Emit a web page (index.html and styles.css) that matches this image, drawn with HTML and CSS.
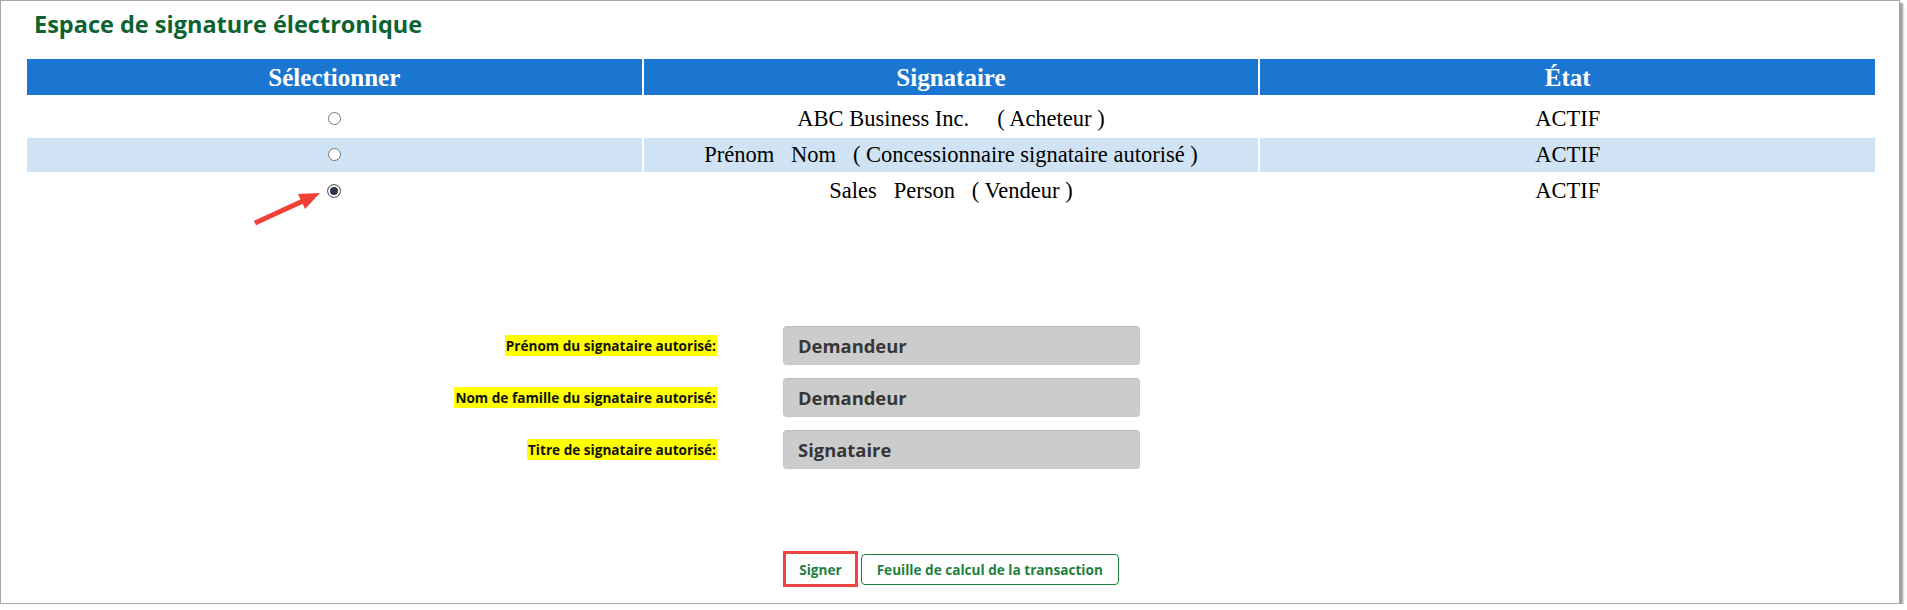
FILE: index.html
```html
<!DOCTYPE html>
<html lang="fr">
<head>
    <meta charset="UTF-8">
    <meta name="viewport" content="width=device-width, initial-scale=1.0">
    <title>Espace de signature électronique</title>
    <link rel="stylesheet" href="styles.css">
</head>
<body>
  <div class="frame">
    <h1 class="page-title">Espace de signature électronique</h1>

    <!-- Signataires -->
    <table class="signers">
      <thead>
        <tr>
          <th>Sélectionner</th>
          <th>Signataire</th>
          <th>État</th>
        </tr>
      </thead>
      <tbody>
        <tr>
          <td><input type="radio" name="signer" /></td>
          <td>ABC Business Inc.&nbsp;&nbsp;&nbsp;&nbsp; ( Acheteur )</td>
          <td>ACTIF</td>
        </tr>
        <tr class="alt">
          <td><input type="radio" name="signer" /></td>
          <td>Prénom &nbsp; Nom &nbsp; ( Concessionnaire signataire autorisé )</td>
          <td>ACTIF</td>
        </tr>
        <tr>
          <td><input type="radio" name="signer" checked /></td>
          <td>Sales &nbsp; Person &nbsp; ( Vendeur )</td>
          <td>ACTIF</td>
        </tr>
      </tbody>
    </table>

    <!-- Signataire autorisé -->
    <div class="sig-form">
      <label class="sig-label" for="firstName"><span>Prénom du signataire autorisé:</span></label>
      <input class="sig-input" type="text" id="firstName" value="Demandeur" readonly />
      <label class="sig-label" for="lastName"><span>Nom de famille du signataire autorisé:</span></label>
      <input class="sig-input" type="text" id="lastName" value="Demandeur" readonly />
      <label class="sig-label" for="signerTitle"><span>Titre de signataire autorisé:</span></label>
      <input class="sig-input" type="text" id="signerTitle" value="Signataire" readonly />
    </div>

    <div class="actions">
      <button class="btn btn-sign">Signer</button>
      <button class="btn">Feuille de calcul de la transaction</button>
    </div>

    <svg class="pointer" width="80" height="40" viewBox="0 0 80 40">
      <line x1="5" y1="35" x2="53" y2="13" stroke="#ef4138" stroke-width="5" />
      <polygon points="70,5 48,6 55,21" fill="#ef4138" />
    </svg>
  </div>
</body>
</html>
```

FILE: styles.css
```css
/* Global Styles */
body {
    margin: 0;
    padding: 0;
    background: #fff;
    font-family: "Open Sans", sans-serif;
}

.frame {
    position: relative;
    width: 1900px;
    height: 604px;
    box-sizing: border-box;
    padding: 0 22px 0 24px;
    border: 1px solid #a8a8a8;
    box-shadow: 3px 3px 2px #9a9a9a;
    background: #fff;
}

.page-title {
    margin: 0 0 0 9px;
    padding-top: 9px;
    font-size: 23.5px;
    line-height: 28px;
    font-weight: 700;
    color: #0b6430;
}

/* Table */
.signers {
    width: 100%;
    margin-top: 19px;
    border-spacing: 2px;
    font-family: "Liberation Serif", "Times New Roman", serif;
    text-align: center;
}

.signers th {
    width: 33.33%;
    padding: 4px 0 3px;
    background: #1b76d1;
    color: #fff;
    font-size: 25px;
    line-height: 29px;
    font-weight: 700;
}

.signers td {
    padding: 4px 0;
    font-size: 22.5px;
    line-height: 26px;
    color: #000;
}

.signers tbody tr:first-child td {
    padding-top: 9px;
}

.signers tr.alt td {
    background: #d0e3f4;
}

.signers input[type="radio"] {
    appearance: none;
    width: 13px;
    height: 13px;
    margin: 0;
    border: 1px solid #767676;
    border-radius: 50%;
    background: #fff;
    vertical-align: middle;
    position: relative;
    top: -2px;
}

.signers input[type="radio"]:checked {
    width: 14px;
    height: 14px;
    border-color: #6e6e6e;
    background: #2b3447;
    box-shadow: inset 0 0 0 2px #fff;
}

/* Form */
.sig-form {
    display: grid;
    grid-template-columns: 692px 357px;
    column-gap: 66px;
    row-gap: 13px;
    align-items: center;
    margin-top: 116px;
}

.sig-label {
    text-align: right;
    font-size: 13.6px;
    font-weight: 700;
    color: #111;
}

.sig-label span {
    background: #ffff00;
    padding: 1px 1px;
}

.sig-input {
    height: 39px;
    box-sizing: border-box;
    border: 1px solid #c6c6c6;
    border-top-color: #bdbdbd;
    border-radius: 4px;
    background: #cccccc;
    padding: 0 14px;
    font-family: "Open Sans", sans-serif;
    font-size: 18.4px;
    font-weight: 700;
    color: #363636;
    outline: none;
}

/* Buttons */
.actions {
    display: flex;
    justify-content: center;
    align-items: center;
    gap: 3px;
    margin-top: 82px;
}

.btn {
    height: 31px;
    padding: 0 15px;
    background: #fff;
    border: 1px solid #1f7f3e;
    border-radius: 4px;
    font-family: "Open Sans", sans-serif;
    font-size: 13.6px;
    font-weight: 700;
    color: #1f7f3e;
}

.btn-sign {
    height: 36px;
    padding: 0 13px;
    border: 3px solid #ef4444;
    border-radius: 0;
}

.pointer {
    position: absolute;
    left: 249px;
    top: 187px;
}
```
